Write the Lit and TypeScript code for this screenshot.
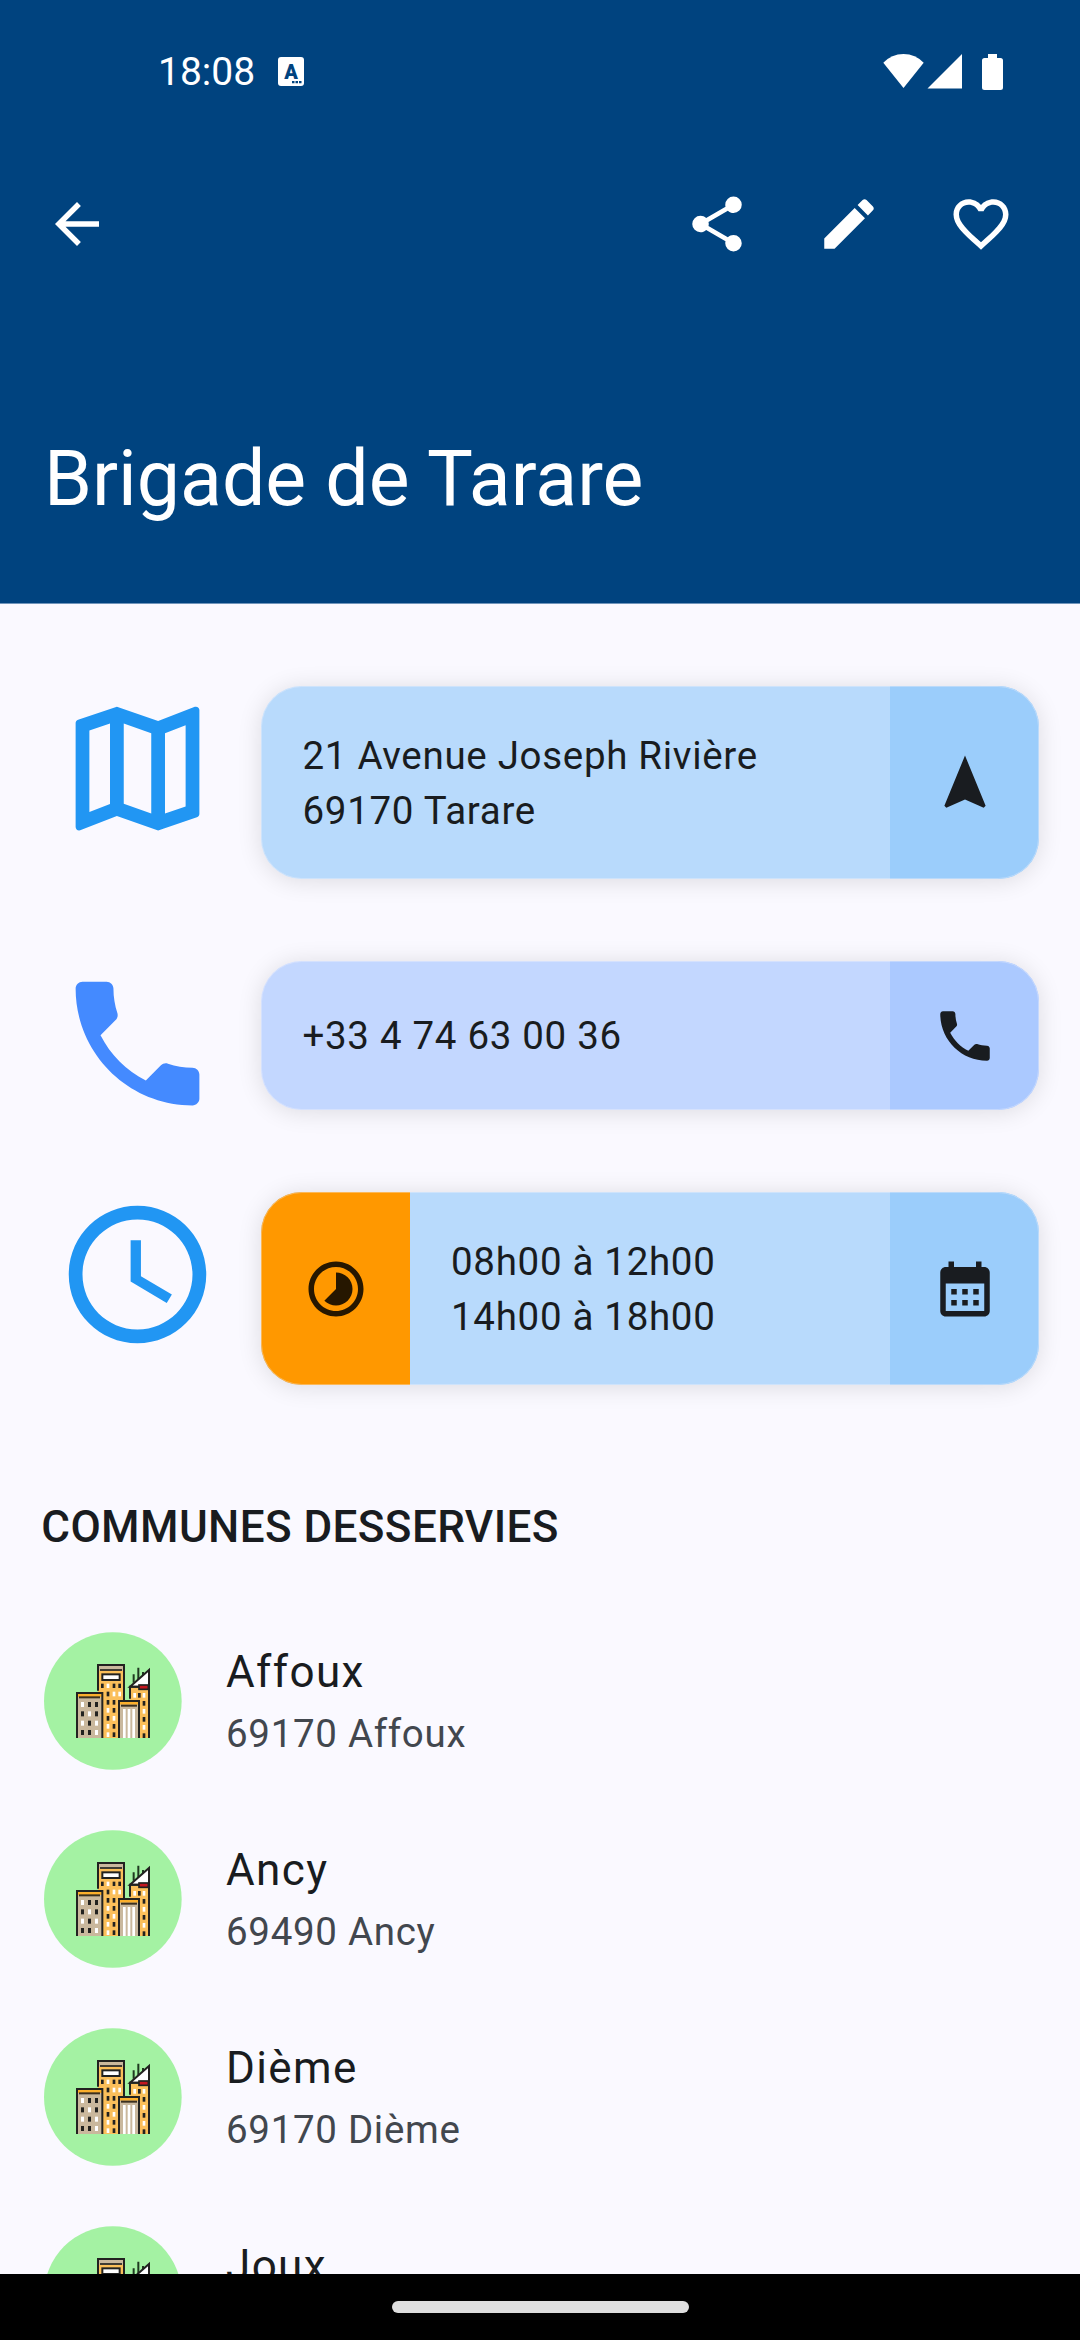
import { LitElement, html, css, svg } from "lit";
import { customElement, property } from "lit/decorators.js";

const ICONS: Record<string, string> = {
  back: "M20 11H7.83l5.59-5.59L12 4l-8 8 8 8 1.41-1.41L7.83 13H20v-2z",
  share:
    "M18 22q-1.25 0-2.125-.875T15 19q0-.175.025-.363t.075-.337l-7.05-4.1q-.425.375-.95.588T6 15q-1.25 0-2.125-.875T3 12t.875-2.125T6 9q.575 0 1.1.213t.95.587l7.05-4.1q-.05-.15-.075-.337T15 5q0-1.25.875-2.125T18 2t2.125.875T21 5t-.875 2.125T18 8q-.575 0-1.1-.213t-.95-.587L8.9 11.3q.05.15.075.338T9 12t-.025.363t-.075.337l7.05 4.1q.425-.375.95-.587T18 16q1.25 0 2.125.875T21 19t-.875 2.125T18 22z",
  edit:
    "M3 17.25V21h3.75L17.81 9.94l-3.75-3.75L3 17.25zM20.71 7.04c.39-.39.39-1.02 0-1.41l-2.34-2.34c-.39-.39-1.02-.39-1.41 0l-1.83 1.83 3.75 3.75 1.83-1.83z",
  heart:
    "M16.5 3c-1.74 0-3.41.81-4.5 2.09C10.91 3.81 9.24 3 7.5 3 4.42 3 2 5.42 2 8.5c0 3.78 3.4 6.86 8.55 11.54L12 21.35l1.45-1.32C18.6 15.36 22 12.28 22 8.5 22 5.42 19.58 3 16.5 3zm-4.4 15.55l-.1.1-.1-.1C7.14 14.24 4 11.39 4 8.5 4 6.5 5.5 5 7.5 5c1.54 0 3.04.99 3.57 2.36h1.87C13.46 5.99 14.96 5 16.5 5c2 0 3.5 1.5 3.5 3.5 0 2.89-3.14 5.74-7.9 10.05z",
  map:
    "M20.5 3l-.16.03L15 5.1 9 3 3.36 4.9c-.21.07-.36.25-.36.48V20.5c0 .28.22.5.5.5l.16-.03L9 18.9l6 2.1 5.64-1.9c.21-.07.36-.25.36-.48V3.5c0-.28-.22-.5-.5-.5zM10 5.47l4 1.4v11.66l-4-1.4V5.47zm-5 .99l3-1.01v11.7l-3 1.16V6.46zm14 11.08l-3 1.01V6.86l3-1.16v11.84z",
  phone:
    "M6.62 10.79c1.44 2.83 3.76 5.14 6.59 6.59l2.2-2.2c.27-.27.67-.36 1.02-.24 1.12.37 2.33.57 3.57.57.55 0 1 .45 1 1V20c0 .55-.45 1-1 1-9.39 0-17-7.61-17-17 0-.55.45-1 1-1h3.5c.55 0 1 .45 1 1 0 1.25.2 2.45.57 3.57.11.35.03.74-.25 1.02l-2.2 2.2z",
  clock:
    "M11.99 2C6.47 2 2 6.48 2 12s4.47 10 9.99 10C17.52 22 22 17.52 22 12S17.52 2 11.99 2zM12 20c-4.42 0-8-3.58-8-8s3.58-8 8-8 8 3.58 8 8-3.58 8-8 8zm.5-13H11v6l5.25 3.15.75-1.23-4.5-2.67z",
  navigation: "M12 2L4.5 20.29l.71.71L12 18l6.79 3 .71-.71z",
  timelapse:
    "M16.24 7.76C15.07 6.59 13.54 6 12 6v6l-4.24 4.24c2.34 2.34 6.14 2.34 8.49 0 2.34-2.34 2.34-6.14-.01-8.48zM12 2C6.48 2 2 6.48 2 12s4.48 10 10 10 10-4.48 10-10S17.52 2 12 2zm0 18c-4.42 0-8-3.58-8-8s3.58-8 8-8 8 3.58 8 8-3.58 8-8 8z",
  calendar:
    "M19 4h-1V2h-2v2H8V2H6v2H5c-1.1 0-2 .9-2 2v14c0 1.1.9 2 2 2h14c1.1 0 2-.9 2-2V6c0-1.1-.9-2-2-2zm0 16H5V10h14v10zM7 12h2v2H7zm4 0h2v2h-2zm4 0h2v2h-2zM7 16h2v2H7zm4 0h2v2h-2zm4 0h2v2h-2z",
};

@customElement("md-icon")
class MdIcon extends LitElement {
  @property() name = "";
  static styles = css`
    :host {
      display: block;
      flex: none;
      width: 66px;
      height: 66px;
    }
    .glyph {
      display: block;
      width: 100%;
      height: 100%;
      fill: currentColor;
    }
  `;
  render() {
    return html`<svg class="glyph" viewBox="0 0 24 24"><path d=${ICONS[this.name]}></path></svg>`;
  }
}

/* Round avatar with a small group of buildings. */
@customElement("city-avatar")
class CityAvatar extends LitElement {
  static styles = css`
    :host {
      display: block;
      flex: none;
      width: 138px;
      height: 138px;
    }
    .art {
      display: block;
      width: 100%;
      height: 100%;
    }
  `;

  private panes(xs: number[], ys: number[], h: number, w: number, light: string) {
    return ys.map((y, r) =>
      xs.map(
        (x, c) =>
          svg`<rect x=${x} y=${y} width=${w} height=${h} fill=${light[r * xs.length + c] === "1" ? "#fff" : "#222220"}></rect>`
      )
    );
  }

  render() {
    return html`<svg class="art" viewBox="12 36 414 414">
      <circle cx="218.500" cy="243" r="206.500" fill="#a4f2a3"></circle>
      <path d="M281 163V188M295 143V180M309 156V170" stroke="#1f3a20" stroke-width="6"></path>
      <path d="M270 200L327 150V200z" fill="#fff" stroke="#222220" stroke-width="6"></path>
      <rect x="270" y="204" width="57" height="150" fill="#fbbf5a"></rect>
      <path d="M270 236V200H327M327 150V354" fill="none" stroke="#222220" stroke-width="6"></path>
      <rect x="297" y="195" width="28" height="13" fill="#c4161f" stroke="#222220" stroke-width="5"></rect>
      ${this.panes([280, 294, 308], [219], 14, 8, "101")}
      ${this.panes([308], [243, 267, 291, 315, 340], 14, 8, "01010")}
      <rect x="174" y="135" width="78" height="219" fill="#fbbf5a"></rect>
      <rect x="176" y="138" width="74" height="14" fill="#cab89d"></rect>
      <path d="M174 212V135H252V242" fill="none" stroke="#222220" stroke-width="6"></path>
      <path d="M180 150H246" stroke="#222220" stroke-width="5"></path>
      <rect x="187" y="163" width="52" height="17" fill="#fff" stroke="#222220" stroke-width="6"></rect>
      ${this.panes([183, 200, 218, 235], [191], 13, 8, "0100")}
      ${this.panes([200, 218, 235], [215], 14, 8, "011")}
      ${this.panes([200, 218], [240, 264, 288, 312, 337], 14, 8, "0010011010")}
      <rect x="111" y="219" width="76" height="135" fill="#cab89d"></rect>
      <rect x="112" y="222" width="75" height="9" fill="#fbaf2c"></rect>
      <path d="M111 354V219H187V354" fill="none" stroke="#222220" stroke-width="6"></path>
      <path d="M117 232H180" stroke="#3b3020" stroke-width="6"></path>
      ${this.panes([123, 144, 165], [246, 274, 302, 330], 15, 9, "100010101001")}
      <rect x="237" y="243" width="60" height="111" fill="#cab89d"></rect>
      <rect x="238" y="246" width="58" height="8" fill="#fbaf2c"></rect>
      <path d="M237 354V243H297V354" fill="none" stroke="#222220" stroke-width="6"></path>
      <path d="M243 257H291" stroke="#3b3020" stroke-width="6"></path>
      <path d="M253 267V354M267 267V354M281 267V354" stroke="#fff" stroke-width="8"></path>
    </svg>`;
  }
}

@customElement("app-root")
class AppRoot extends LitElement {
  private communes = [
    { name: "Affoux", place: "69170 Affoux" },
    { name: "Ancy", place: "69490 Ancy" },
    { name: "Dième", place: "69170 Dième" },
    { name: "Joux", place: "69170 Joux" },
  ];

  static styles = css`
    :host {
      display: flex;
      flex-direction: column;
      width: 1080px;
      height: 2340px;
      overflow: hidden;
      background: #faf9ff;
      color: #191c20;
      font-family: Roboto, "Liberation Sans", sans-serif;
    }
    .header {
      flex: none;
      box-sizing: border-box;
      display: flex;
      flex-direction: column;
      height: 604px;
      background: #00437f;
      border-bottom: 1px solid #7095bb;
      color: #fff;
    }
    .status {
      display: flex;
      align-items: center;
      justify-content: space-between;
      box-sizing: border-box;
      height: 142px;
      padding: 0 76px 0 158px;
    }
    .status-left {
      display: flex;
      align-items: center;
      gap: 23px;
    }
    .time {
      font-size: 39px;
      line-height: 46px;
      margin-top: 2px;
    }
    .status-svg {
      display: block;
    }
    .badge {
      font: 900 20px Roboto, sans-serif;
    }
    .toolbar {
      display: flex;
      align-items: center;
      height: 132px;
      margin-top: 16px;
      padding: 0 33px 0 44px;
    }
    .actions {
      display: flex;
      margin-left: auto;
    }
    .action {
      display: grid;
      place-items: center;
      width: 132px;
      height: 132px;
    }
    .title {
      margin: auto 0 78px 44px;
      font-size: 77px;
      font-weight: 400;
      line-height: 92px;
    }
    .body {
      flex: 1;
      min-height: 0;
      overflow: hidden;
    }
    .infos {
      display: flex;
      flex-direction: column;
      gap: 82.5px;
      padding: 82px 41.25px 0 55px;
    }
    .info {
      display: flex;
      align-items: stretch;
      gap: 41.25px;
    }
    .lead-box {
      flex: none;
      width: 165px;
      height: 148.5px;
      color: #2196f3;
    }
    .lead-box.tel {
      color: #448aff;
    }
    .lead {
      width: 165px;
      height: 165px;
    }
    .card {
      position: relative;
      flex: 1;
      display: flex;
      align-items: stretch;
      min-height: 148.5px;
      border-radius: 41px;
      overflow: hidden;
      background: #b8dafc;
    }
    .wrap {
      flex: 1;
      display: flex;
      border-radius: 41px;
      box-shadow: 0 2px 24px rgba(0, 0, 0, 0.12);
    }
    .card::after {
      content: "";
      position: absolute;
      inset: 0;
      border-radius: 41px;
      border: 1px solid rgba(245, 243, 248, 0.35);
    }
    .card.tel {
      background: #c3d7ff;
    }
    .lines {
      flex: 1;
      align-self: center;
      padding: 42.25px 41.25px 40.25px;
      font-size: 38.5px;
      line-height: 55px;
      letter-spacing: 0.69px;
    }
    .tel .lines {
      padding-block: 0;
    }
    .side {
      flex: none;
      display: grid;
      place-items: center;
      box-sizing: border-box;
      width: 148.5px;
      padding-top: 1.5px;
      background: #9bcdfb;
    }
    .tel .side {
      background: #abc9ff;
    }
    .side.state {
      background: #ff9800;
      color: #261700;
    }
    .section {
      margin: 0;
      padding: 115px 0 0 41.25px;
      font-size: 44px;
      font-weight: 500;
      line-height: 55px;
      letter-spacing: 0.41px;
    }
    .list {
      display: flex;
      flex-direction: column;
      margin-top: 47px;
    }
    .row {
      display: flex;
      align-items: center;
      gap: 44px;
      height: 198px;
      padding-left: 44px;
    }
    .name {
      margin: -1px 0 1px;
      font-size: 44px;
      line-height: 66px;
      letter-spacing: 1.375px;
    }
    .place {
      font-size: 38.5px;
      line-height: 55px;
      letter-spacing: 0.69px;
      color: #42474e;
    }
    .nav {
      flex: none;
      display: flex;
      justify-content: center;
      align-items: center;
      height: 66px;
      background: #000;
    }
    .handle {
      width: 297px;
      height: 12px;
      border-radius: 6px;
      background: #dedede;
    }
  `;

  render() {
    return html`
      <header class="header">
        <div class="status">
          <div class="status-left">
            <span class="time">18:08</span>
            <svg class="status-svg" width="26" height="29" viewBox="0 0 26 29">
              <rect width="26" height="29" rx="3" fill="#fff"></rect>
              <text class="badge" x="13" y="21.500" text-anchor="middle" fill="#00437f">A</text>
              <path d="M14 25.200h2.500m1 0h2.500m1 0h2.500" stroke="#00437f" stroke-width="2.200"></path>
            </svg>
          </div>
          <svg class="status-svg" width="121" height="37" viewBox="0 0 121 37" fill="#fff">
            <path d="M0.300 9.800Q8.500 1 20.500 1T40.700 9.800L20.500 35z"></path>
            <path d="M44.500 35.600L79 1V35.600z"></path>
            <path d="M105 1h9v4h3.500a2.500 2.500 0 0 1 2.500 2.500v27a2.500 2.500 0 0 1-2.500 2.500h-16a2.500 2.500 0 0 1-2.500-2.500v-27a2.500 2.500 0 0 1 2.500-2.500h3.500z"></path>
          </svg>
        </div>
        <div class="toolbar">
          <md-icon name="back"></md-icon>
          <div class="actions">
            <div class="action"><md-icon name="share"></md-icon></div>
            <div class="action"><md-icon name="edit"></md-icon></div>
            <div class="action"><md-icon name="heart"></md-icon></div>
          </div>
        </div>
        <h1 class="title">Brigade de Tarare</h1>
      </header>
      <main class="body">
        <div class="infos">
          <div class="info">
            <div class="lead-box"><md-icon class="lead" name="map"></md-icon></div>
            <div class="wrap">
              <div class="card">
                <div class="lines">21 Avenue Joseph Rivière<br />69170 Tarare</div>
                <div class="side"><md-icon name="navigation"></md-icon></div>
              </div>
            </div>
          </div>
          <div class="info">
            <div class="lead-box tel"><md-icon class="lead" name="phone"></md-icon></div>
            <div class="wrap">
              <div class="card tel">
                <div class="lines">+33 4 74 63 00 36</div>
                <div class="side"><md-icon name="phone"></md-icon></div>
              </div>
            </div>
          </div>
          <div class="info">
            <div class="lead-box"><md-icon class="lead" name="clock"></md-icon></div>
            <div class="wrap">
              <div class="card">
                <div class="side state"><md-icon name="timelapse"></md-icon></div>
                <div class="lines">08h00 à 12h00<br />14h00 à 18h00</div>
                <div class="side"><md-icon name="calendar"></md-icon></div>
              </div>
            </div>
          </div>
        </div>
        <h2 class="section">COMMUNES DESSERVIES</h2>
        <div class="list">
          ${this.communes.map(
            (c) => html`<div class="row">
              <city-avatar></city-avatar>
              <div>
                <div class="name">${c.name}</div>
                <div class="place">${c.place}</div>
              </div>
            </div>`
          )}
        </div>
      </main>
      <footer class="nav"><div class="handle"></div></footer>
    `;
  }
}
